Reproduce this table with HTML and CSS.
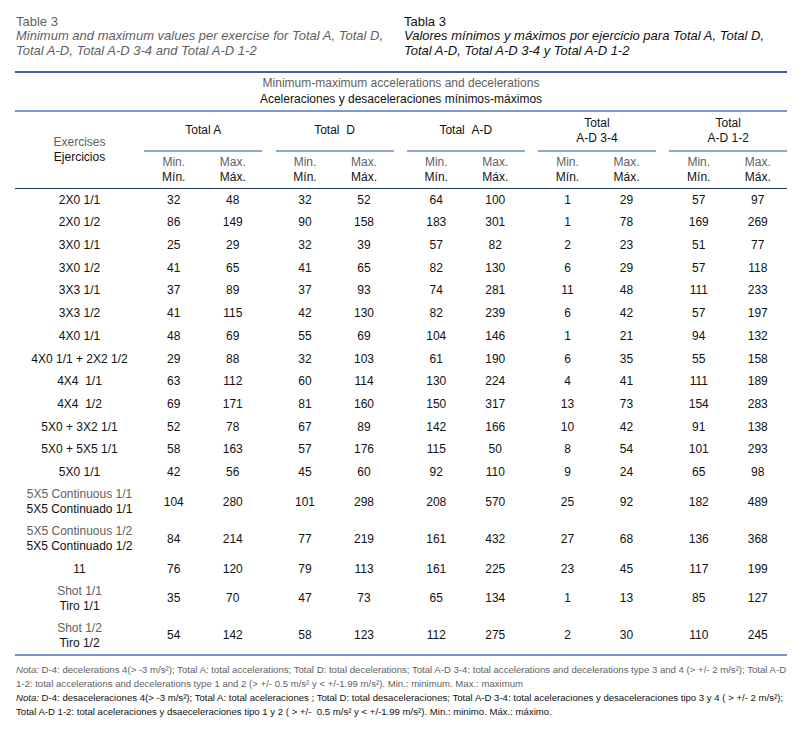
FILE: index.html
```
<!DOCTYPE html>
<html lang="en">
<head>
<meta charset="utf-8">
<title>Table 3</title>
<link rel="stylesheet" href="styles.css">
</head>
<body>
<div class="page">
  <header class="titles">
    <div class="title en">
      <div>Table 3</div>
      <div class="cap">Minimum and maximum values per exercise for Total A, Total D,<br>Total A-D, Total A-D 3-4 and Total A-D 1-2</div>
    </div>
    <div class="title es">
      <div>Tabla 3</div>
      <div class="cap">Valores mínimos y máximos por ejercicio para Total A, Total D,<br>Total A-D, Total A-D 3-4 y Total A-D 1-2</div>
    </div>
  </header>

  <div class="table">
    <div class="supertitle">
      <div class="en">Minimum-maximum accelerations and decelerations</div>
      <div class="es">Aceleraciones y desaceleraciones mínimos-máximos</div>
    </div>

    <div class="head">
      <div class="exh"><span class="en">Exercises</span><span class="es">Ejercicios</span></div>
      <div class="grp">
        <div class="gname">Total A</div>
        <div class="subs"><div><span class="en">Min.</span><span class="es">Mín.</span></div><div><span class="en">Max.</span><span class="es">Máx.</span></div></div>
      </div>
      <div class="grp">
        <div class="gname">Total&nbsp;&nbsp;D</div>
        <div class="subs"><div><span class="en">Min.</span><span class="es">Mín.</span></div><div><span class="en">Max.</span><span class="es">Máx.</span></div></div>
      </div>
      <div class="grp">
        <div class="gname">Total&nbsp;&nbsp;A-D</div>
        <div class="subs"><div><span class="en">Min.</span><span class="es">Mín.</span></div><div><span class="en">Max.</span><span class="es">Máx.</span></div></div>
      </div>
      <div class="grp">
        <div class="gname">Total<br>A-D 3-4</div>
        <div class="subs"><div><span class="en">Min.</span><span class="es">Mín.</span></div><div><span class="en">Max.</span><span class="es">Máx.</span></div></div>
      </div>
      <div class="grp">
        <div class="gname">Total<br>A-D 1-2</div>
        <div class="subs"><div><span class="en">Min.</span><span class="es">Mín.</span></div><div><span class="en">Max.</span><span class="es">Máx.</span></div></div>
      </div>
    </div>

    <div class="body">
      <div class="row"><div class="ex">2X0 1/1</div><div class="v"><span>32</span><span>48</span></div><div class="v"><span>32</span><span>52</span></div><div class="v"><span>64</span><span>100</span></div><div class="v"><span>1</span><span>29</span></div><div class="v"><span>57</span><span>97</span></div></div>
      <div class="row"><div class="ex">2X0 1/2</div><div class="v"><span>86</span><span>149</span></div><div class="v"><span>90</span><span>158</span></div><div class="v"><span>183</span><span>301</span></div><div class="v"><span>1</span><span>78</span></div><div class="v"><span>169</span><span>269</span></div></div>
      <div class="row"><div class="ex">3X0 1/1</div><div class="v"><span>25</span><span>29</span></div><div class="v"><span>32</span><span>39</span></div><div class="v"><span>57</span><span>82</span></div><div class="v"><span>2</span><span>23</span></div><div class="v"><span>51</span><span>77</span></div></div>
      <div class="row"><div class="ex">3X0 1/2</div><div class="v"><span>41</span><span>65</span></div><div class="v"><span>41</span><span>65</span></div><div class="v"><span>82</span><span>130</span></div><div class="v"><span>6</span><span>29</span></div><div class="v"><span>57</span><span>118</span></div></div>
      <div class="row"><div class="ex">3X3 1/1</div><div class="v"><span>37</span><span>89</span></div><div class="v"><span>37</span><span>93</span></div><div class="v"><span>74</span><span>281</span></div><div class="v"><span>11</span><span>48</span></div><div class="v"><span>111</span><span>233</span></div></div>
      <div class="row"><div class="ex">3X3 1/2</div><div class="v"><span>41</span><span>115</span></div><div class="v"><span>42</span><span>130</span></div><div class="v"><span>82</span><span>239</span></div><div class="v"><span>6</span><span>42</span></div><div class="v"><span>57</span><span>197</span></div></div>
      <div class="row"><div class="ex">4X0 1/1</div><div class="v"><span>48</span><span>69</span></div><div class="v"><span>55</span><span>69</span></div><div class="v"><span>104</span><span>146</span></div><div class="v"><span>1</span><span>21</span></div><div class="v"><span>94</span><span>132</span></div></div>
      <div class="row"><div class="ex">4X0 1/1 + 2X2 1/2</div><div class="v"><span>29</span><span>88</span></div><div class="v"><span>32</span><span>103</span></div><div class="v"><span>61</span><span>190</span></div><div class="v"><span>6</span><span>35</span></div><div class="v"><span>55</span><span>158</span></div></div>
      <div class="row"><div class="ex">4X4&nbsp;&nbsp;1/1</div><div class="v"><span>63</span><span>112</span></div><div class="v"><span>60</span><span>114</span></div><div class="v"><span>130</span><span>224</span></div><div class="v"><span>4</span><span>41</span></div><div class="v"><span>111</span><span>189</span></div></div>
      <div class="row"><div class="ex">4X4&nbsp;&nbsp;1/2</div><div class="v"><span>69</span><span>171</span></div><div class="v"><span>81</span><span>160</span></div><div class="v"><span>150</span><span>317</span></div><div class="v"><span>13</span><span>73</span></div><div class="v"><span>154</span><span>283</span></div></div>
      <div class="row"><div class="ex">5X0 + 3X2 1/1</div><div class="v"><span>52</span><span>78</span></div><div class="v"><span>67</span><span>89</span></div><div class="v"><span>142</span><span>166</span></div><div class="v"><span>10</span><span>42</span></div><div class="v"><span>91</span><span>138</span></div></div>
      <div class="row"><div class="ex">5X0 + 5X5 1/1</div><div class="v"><span>58</span><span>163</span></div><div class="v"><span>57</span><span>176</span></div><div class="v"><span>115</span><span>50</span></div><div class="v"><span>8</span><span>54</span></div><div class="v"><span>101</span><span>293</span></div></div>
      <div class="row"><div class="ex">5X0 1/1</div><div class="v"><span>42</span><span>56</span></div><div class="v"><span>45</span><span>60</span></div><div class="v"><span>92</span><span>110</span></div><div class="v"><span>9</span><span>24</span></div><div class="v"><span>65</span><span>98</span></div></div>
      <div class="row two"><div class="ex"><span class="en">5X5 Continuous 1/1</span><span>5X5 Continuado 1/1</span></div><div class="v"><span>104</span><span>280</span></div><div class="v"><span>101</span><span>298</span></div><div class="v"><span>208</span><span>570</span></div><div class="v"><span>25</span><span>92</span></div><div class="v"><span>182</span><span>489</span></div></div>
      <div class="row two"><div class="ex"><span class="en">5X5 Continuous 1/2</span><span>5X5 Continuado 1/2</span></div><div class="v"><span>84</span><span>214</span></div><div class="v"><span>77</span><span>219</span></div><div class="v"><span>161</span><span>432</span></div><div class="v"><span>27</span><span>68</span></div><div class="v"><span>136</span><span>368</span></div></div>
      <div class="row"><div class="ex">11</div><div class="v"><span>76</span><span>120</span></div><div class="v"><span>79</span><span>113</span></div><div class="v"><span>161</span><span>225</span></div><div class="v"><span>23</span><span>45</span></div><div class="v"><span>117</span><span>199</span></div></div>
      <div class="row two"><div class="ex"><span class="en">Shot 1/1</span><span>Tiro 1/1</span></div><div class="v"><span>35</span><span>70</span></div><div class="v"><span>47</span><span>73</span></div><div class="v"><span>65</span><span>134</span></div><div class="v"><span>1</span><span>13</span></div><div class="v"><span>85</span><span>127</span></div></div>
      <div class="row two"><div class="ex"><span class="en">Shot 1/2</span><span>Tiro 1/2</span></div><div class="v"><span>54</span><span>142</span></div><div class="v"><span>58</span><span>123</span></div><div class="v"><span>112</span><span>275</span></div><div class="v"><span>2</span><span>30</span></div><div class="v"><span>110</span><span>245</span></div></div>
    </div>
  </div>

  <footer class="notes">
    <p class="en"><i>Nota:</i> D-4: decelerations 4(&gt; -3 m/s²); Total A: total accelerations; Total D: total decelerations; Total A-D 3-4: total accelerations and decelerations type 3 and 4 (&gt; +/- 2 m/s²); Total A-D<br>1-2: total accelerations and decelerations type 1 and 2 (&gt; +/- 0.5 m/s² y &lt; +/-1.99 m/s²). Min.: minimum. Max.: maximum</p>
    <p class="es"><i>Nota:</i> D-4: desaceleraciones 4(&gt; -3 m/s²); Total A: total aceleraciones ; Total D: total desaceleraciones; Total A-D 3-4: total aceleraciones y desaceleraciones tipo 3 y 4 ( &gt; +/- 2 m/s²);<br>Total A-D 1-2: total aceleraciones y dsaeceleraciones tipo 1 y 2 ( &gt; +/-&nbsp; 0.5 m/s² y &lt; +/-1.99 m/s²). Min.: minimo. Máx.: máximo.</p>
  </footer>
</div>
</body>
</html>
```

FILE: styles.css
```
html, body {
  margin: 0;
  padding: 0;
  background: #ffffff;
}

.page {
  width: 772px;
  padding: 14.5px 0 0 15px;
  font-family: "Liberation Sans", Arial, sans-serif;
  color: #111111;
}

.en { color: #5f5f5f; }
.es { color: #111111; }

.titles {
  display: grid;
  grid-template-columns: 388px 1fr;
  font-size: 13px;
  line-height: 14.8px;
  padding-left: 1px;
}

.title .cap { font-style: italic; }

.table {
  margin-top: 12px;
  border-top: 2px solid #3e5ea8;
  font-size: 12px;
}

.supertitle {
  text-align: center;
  line-height: 16.5px;
  padding: 2px 0 2px;
  border-bottom: 2px solid #7d98cf;
}

.supertitle div { display: block; }

.head,
.row {
  display: grid;
  grid-template-columns: 116px repeat(5, 118px);
  column-gap: 13.25px;
}

.head {
  border-bottom: 1.5px solid #1c3567;
}

.exh {
  display: flex;
  flex-direction: column;
  justify-content: center;
  align-items: center;
  padding-left: 13px;
  line-height: 15px;
}

.grp {
  display: flex;
  flex-direction: column;
}

.gname {
  height: 38.5px;
  display: flex;
  align-items: center;
  justify-content: center;
  text-align: center;
  line-height: 15.5px;
  border-bottom: 2px solid #8fa7d6;
}

.subs {
  display: grid;
  grid-template-columns: 1fr 1fr;
  padding: 2.75px 0;
  line-height: 15px;
}

.subs > div {
  display: flex;
  flex-direction: column;
  align-items: center;
}

.body {
  border-bottom: 2px solid #7a96cf;
}

.row {
  line-height: 15px;
  padding: 3.85px 0;
}

.row.two {
  padding: 3.2px 0;
  line-height: 15.3px;
}

.ex {
  padding-left: 13px;
  display: flex;
  flex-direction: column;
  align-items: center;
  justify-content: center;
  white-space: nowrap;
}

.v {
  display: grid;
  grid-template-columns: 1fr 1fr;
  align-items: center;
  text-align: center;
}

.notes {
  margin-top: 7px;
  font-size: 9.6px;
  line-height: 13.9px;
  white-space: nowrap;
  padding-left: 1px;
}

.notes p { margin: 0; }
```
